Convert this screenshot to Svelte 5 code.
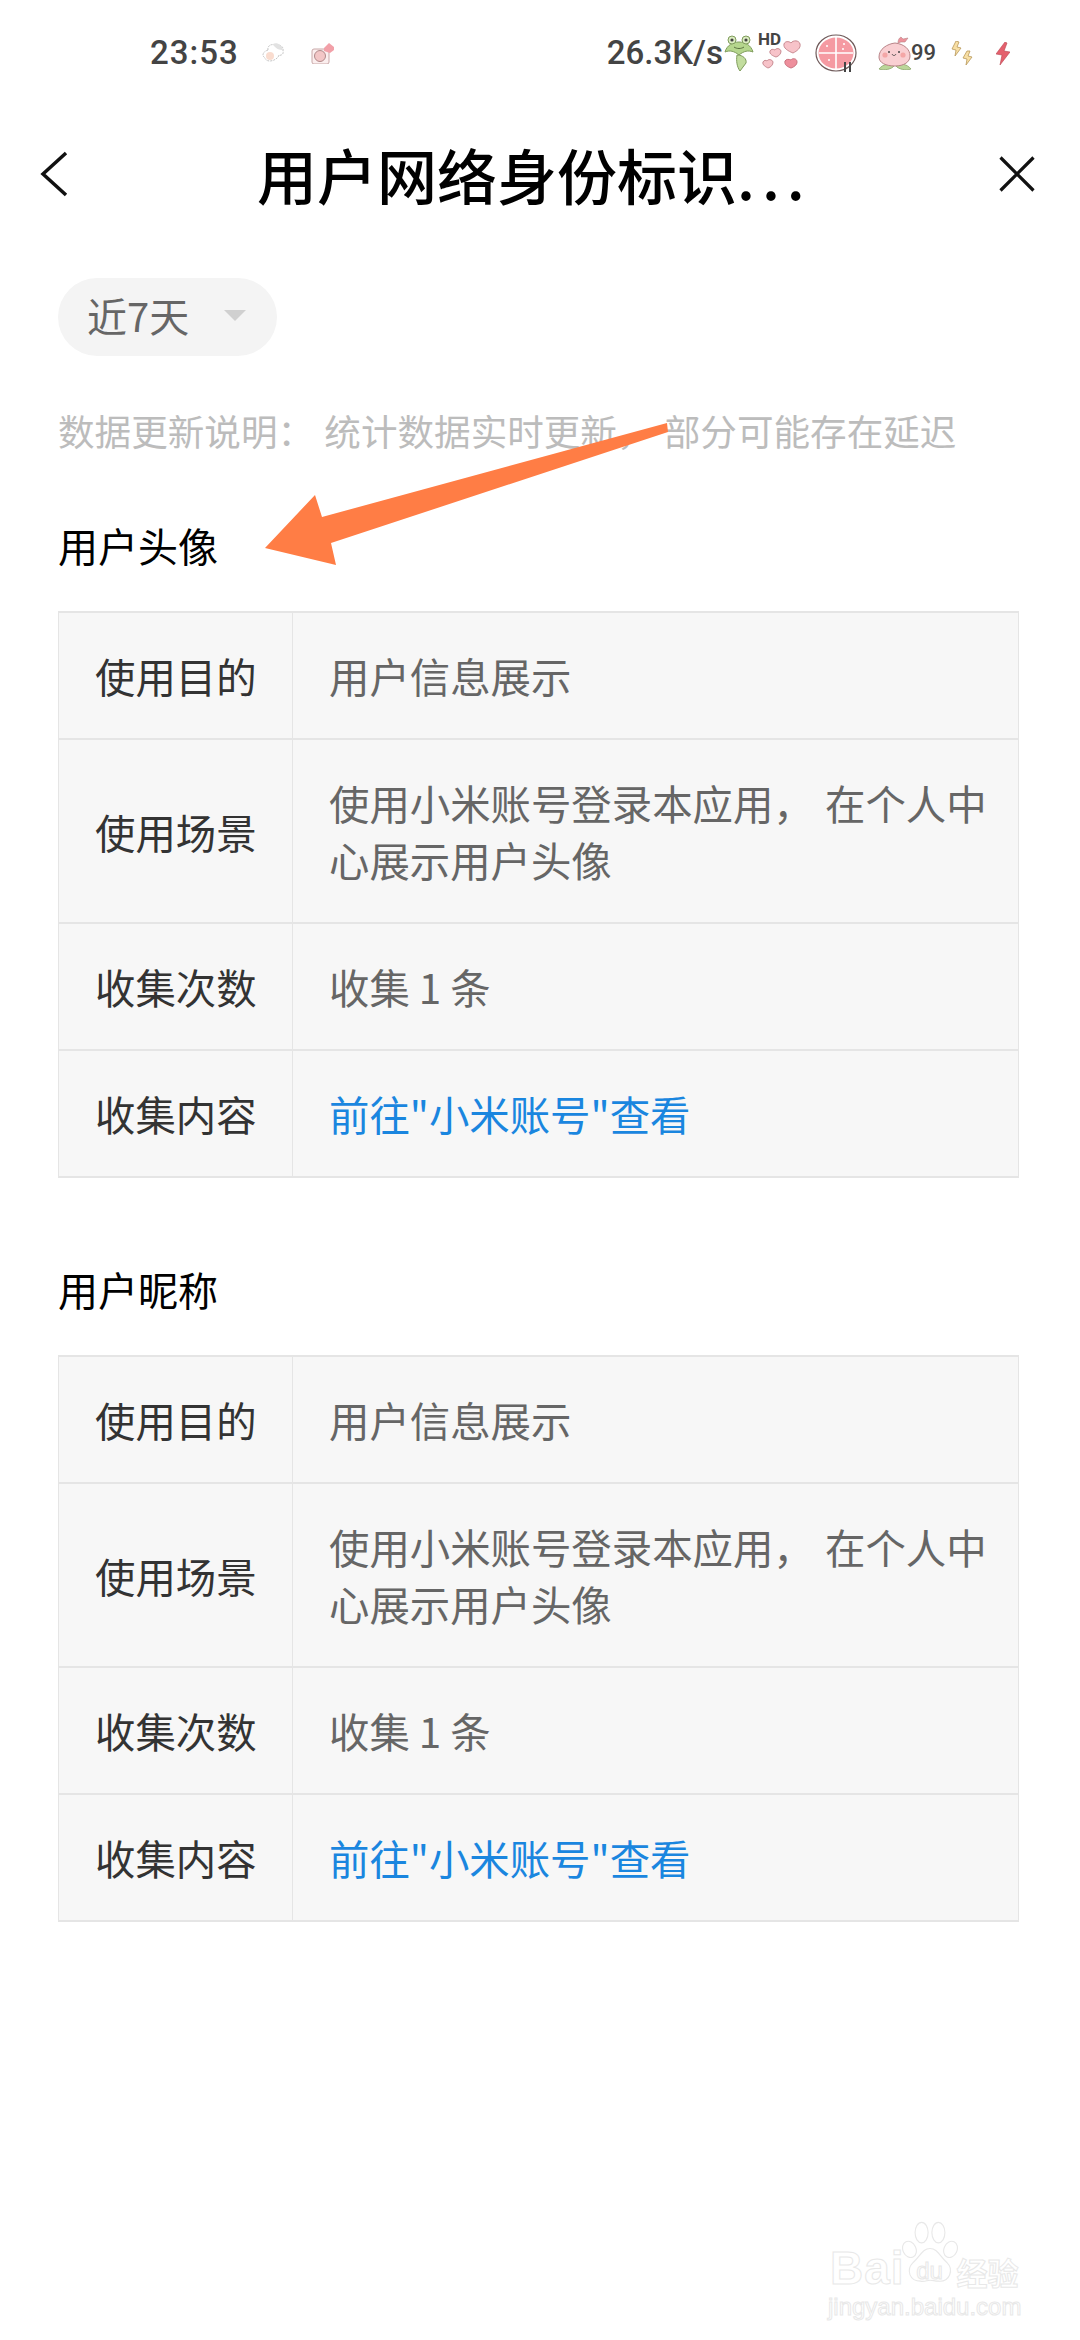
<script lang="ts">
	const sections = ['用户头像', '用户昵称'];
</script>

<div class="page">
	<div class="statusbar">
		<div class="status-left">
			<span class="time">23:53</span>
			<svg class="ic-sheep" viewBox="0 0 24 22" aria-hidden="true">
				<path d="M7 8c-1-5 5-7 8-4 3-2 8 0 7 5 1 3-2 5-4 4-1 5-12 9-14 3-3-2-3-6 3-8z" fill="#fff" stroke="#c4c4c4" stroke-width="1" stroke-dasharray="2 1" />
				<path d="M12 2c3-2 9 0 10 6-3 0-8-1-10-6z" fill="#e2e2e2" />
				<circle cx="9" cy="14" r="4" fill="#f9dccf" />
			</svg>
			<svg class="ic-pig" viewBox="0 0 24 22" aria-hidden="true">
				<rect x="1" y="7" width="17" height="15" rx="2" fill="#fbeeee" stroke="#c9a8a8" stroke-width="1" />
				<circle cx="9" cy="14" r="5.5" fill="#f3c6c6" stroke="#b08a8a" stroke-width="1" />
				<path d="M13 6l5-5 5 4v3l-4 3-6-2z" fill="#f2a0a8" />
			</svg>
		</div>
		<div class="status-right">
			<span class="speed">26.3K/s</span>
			<svg class="ic-frog" viewBox="0 0 30 38" aria-hidden="true">
				<path d="M1 18C3 11 9 8 15 8s12 3 14 10c-5-2-9-1-14 3-5-4-9-5-14-3z" fill="#b5d68d" stroke="#7f9c5c" stroke-width="1" />
				<circle cx="8" cy="6" r="4" fill="#dcecc2" stroke="#7f9c5c" stroke-width="1" />
				<circle cx="22" cy="6" r="4" fill="#dcecc2" stroke="#7f9c5c" stroke-width="1" />
				<circle cx="8" cy="6" r="1.6" fill="#444" />
				<circle cx="22" cy="6" r="1.6" fill="#444" />
				<path d="M10 13c3 2 7 2 10 0" fill="none" stroke="#5a7040" stroke-width="1" />
				<path d="M13 21c6 0 10 4 9 8l-6 8c-3-4-4-10-3-16z" fill="#c2dd9e" stroke="#7f9c5c" stroke-width="1" />
			</svg>
			<div class="hd-hearts">
				<span class="hd">HD</span>
				<svg class="ic-hearts" viewBox="0 0 40 32" aria-hidden="true">
					<path d="M31 16c-5-2-10-5-9-9 1-3 5-3 7-1 2-3 8-3 9 1 1 4-3 7-7 9z" fill="#f7c3c9" stroke="#c98b92" stroke-width="1" />
					<path d="M14 20c-3-1-7-3-6-6 1-2 3-2 5-1 1-2 5-2 6 1 0 3-2 5-5 6z" fill="#f7c3c9" stroke="#c98b92" stroke-width="1" />
					<path d="M6 31c-2-1-6-3-5-6 1-2 3-2 4-1 1-2 5-2 6 1 0 3-2 5-5 6z" fill="#f7c3c9" stroke="#c98b92" stroke-width="1" />
					<path d="M29 31c-3-1-7-3-6-7 1-2 4-2 6-1 1-2 6-2 6 2 0 3-3 5-6 6z" fill="#ee8f9c" stroke="#c9727e" stroke-width="1" />
				</svg>
			</div>
			<div class="ic-fruit-wrap">
				<svg class="ic-fruit" viewBox="0 0 42 38" aria-hidden="true">
					<ellipse cx="21" cy="19" rx="20" ry="18" fill="#fff" stroke="#6f5a5a" stroke-width="1.2" />
					<ellipse cx="21" cy="19" rx="17.5" ry="15.5" fill="#f59aa2" />
					<path d="M21 3v32M4 19h34" stroke="#fff" stroke-width="1.6" />
					<g fill="#fff">
						<circle cx="12" cy="12" r="1" />
						<circle cx="29" cy="10" r="1" />
						<circle cx="14" cy="26" r="1" />
						<circle cx="28" cy="15" r="1" />
					</g>
				</svg>
				<span class="bars"></span>
			</div>
			<svg class="ic-peach" viewBox="0 0 36 34" aria-hidden="true">
				<path d="M2 33c4-5 10-6 15-3-2 3-10 5-15 3zM34 33c-4-5-10-6-15-3 2 3 10 5 15 3z" fill="#bcd69a" stroke="#8aa56a" stroke-width="0.8" />
				<path d="M18 7C10 8 2 13 2 21c0 6 7 9 16 9s15-4 15-10c0-7-6-12-15-13z" fill="#f9cfd2" stroke="#b98488" stroke-width="1" />
				<path d="M21 7c0-3 1-5 3-6l2 2 5-1-3 4h-4z" fill="#ee929b" stroke="#b98488" stroke-width="0.6" />
				<circle cx="12" cy="16" r="1" fill="#444" />
				<circle cx="22" cy="16" r="1" fill="#444" />
				<path d="M15 18c1 2 3 2 4 0" fill="none" stroke="#444" stroke-width="0.9" />
				<circle cx="8" cy="19" r="2.6" fill="#f4a6a6" />
				<circle cx="26" cy="19" r="2.6" fill="#f4a6a6" />
			</svg>
			<span class="signal">99</span>
			<svg class="ic-bolts" viewBox="0 0 22 25" aria-hidden="true">
				<path d="M5 0L1 8l4 1-1 6 6-8-4-1 2-5z" fill="#f8dfa4" stroke="#b7985a" stroke-width="0.8" />
				<path d="M16 10l-4 7 4 1-1 6 6-8-4-1 2-5z" fill="#f8dfa4" stroke="#b7985a" stroke-width="0.8" />
			</svg>
			<svg class="ic-bolt" viewBox="0 0 14 23" aria-hidden="true">
				<path d="M9 0L0 12l6 1-2 10 10-13-6-1 3-8z" fill="#e4606d" stroke="#b9434f" stroke-width="0.6" />
			</svg>
		</div>
	</div>

	<header class="header">
		<svg class="back" viewBox="0 0 28 46" aria-hidden="true">
			<path d="M26 2L3 23l23 21" />
		</svg>
		<h1 class="title">用户网络身份标识<span class="dots">...</span></h1>
		<svg class="close" viewBox="0 0 36 36" aria-hidden="true">
			<path d="M1.5 1.5l33 33M34.5 1.5l-33 33" />
		</svg>
	</header>

	<main class="content">
		<div class="range">
			<span>近7天</span>
			<i class="caret"></i>
		</div>
		<p class="note">数据更新说明<span class="punct">&#xFF1A;</span>统计数据实时更新<span class="punct">&#xFF0C;</span>部分可能存在延迟</p>

		{#each sections as name}
			<section class="block">
				<h2 class="block-title">{name}</h2>
				<table class="info">
					<tbody>
						<tr>
							<th>使用目的</th>
							<td>用户信息展示</td>
						</tr>
						<tr>
							<th>使用场景</th>
							<td>使用小米账号登录本应用<span class="punct">&#xFF0C;</span>在个人中心展示用户头像</td>
						</tr>
						<tr>
							<th>收集次数</th>
							<td>收集 1 条</td>
						</tr>
						<tr>
							<th>收集内容</th>
							<td class="link">前往"小米账号"查看</td>
						</tr>
					</tbody>
				</table>
			</section>
		{/each}
	</main>

	<!-- annotation arrow pasted over the screenshot -->
	<svg class="arrow" viewBox="0 0 1080 700" aria-hidden="true">
		<polygon points="667,423 322,517 315,495 265,548 336,565 331,543 668,432" fill="#ff7d45" />
	</svg>

	<div class="watermark">
		<div class="wm-top">
			<span class="wm-bai">Bai</span>
			<div class="wm-paw">
				<svg viewBox="0 0 60 72" aria-hidden="true">
					<ellipse cx="8" cy="30" rx="7" ry="9" transform="rotate(-25 8 30)" />
					<ellipse cx="21" cy="12" rx="7" ry="11" />
					<ellipse cx="39" cy="12" rx="7" ry="11" />
					<ellipse cx="52" cy="30" rx="7" ry="9" transform="rotate(25 52 30)" />
					<path d="M30 29c8 0 11 9 18 15 8 8 3 21-9 20-4 0-6-1-9-1s-6 2-10 1C8 64 4 52 12 44c7-6 10-15 18-15z" />
				</svg>
				<span class="wm-du">du</span>
			</div>
			<span class="wm-cn">经验</span>
		</div>
		<span class="wm-url">jingyan.baidu.com</span>
	</div>
</div>

<style>
	:global(body) {
		margin: 0;
		background: #fff;
	}

	.page {
		position: relative;
		width: 1080px;
		height: 2340px;
		overflow: hidden;
		background: #fff;
		font-family: 'Noto Sans CJK SC', 'Noto Sans', sans-serif;
	}

	.statusbar {
		display: flex;
		align-items: center;
		justify-content: space-between;
		height: 106px;
		padding: 0 70px 0 150px;
		box-sizing: border-box;
		color: #444;
		font-family: Roboto, 'Noto Sans', sans-serif;
	}

	.status-left,
	.status-right {
		display: flex;
		align-items: center;
	}

	.time {
		font-size: 33px;
		font-weight: 500;
		letter-spacing: 1px;
		line-height: 40px;
	}

	.ic-sheep {
		width: 24px;
		height: 22px;
		margin-left: 22px;
	}

	.ic-pig {
		width: 24px;
		height: 22px;
		margin-left: 26px;
	}

	.speed {
		font-size: 33px;
		font-weight: 500;
		line-height: 40px;
	}

	.ic-frog {
		width: 30px;
		height: 38px;
		margin-left: 1px;
	}

	.hd-hearts {
		position: relative;
		width: 46px;
		height: 38px;
		margin-left: 3px;
	}

	.hd {
		position: absolute;
		left: 1px;
		top: -4px;
		font-size: 17px;
		font-weight: 700;
		line-height: 18px;
	}

	.ic-hearts {
		position: absolute;
		left: 4px;
		top: 3px;
		width: 42px;
		height: 32px;
	}

	.ic-fruit-wrap {
		position: relative;
		width: 42px;
		height: 38px;
		margin-left: 12px;
	}

	.ic-fruit {
		display: block;
		width: 42px;
		height: 38px;
	}

	.bars {
		position: absolute;
		right: 6px;
		bottom: 0;
		width: 3px;
		height: 10px;
		border-left: 2px solid #444;
		border-right: 2px solid #444;
	}

	.ic-peach {
		width: 36px;
		height: 34px;
		margin-left: 20px;
	}

	.signal {
		font-size: 22px;
		font-weight: 500;
		margin-left: -2px;
		line-height: 30px;
	}

	.ic-bolts {
		width: 22px;
		height: 25px;
		margin-left: 15px;
	}

	.ic-bolt {
		width: 14px;
		height: 23px;
		margin-left: 23px;
	}

	.header {
		display: flex;
		align-items: center;
		height: 136px;
		padding: 0 45px 0 40px;
		box-sizing: border-box;
	}

	.back {
		width: 28px;
		height: 46px;
		fill: none;
		stroke: #111;
		stroke-width: 3.5;
		flex: none;
	}

	.title {
		flex: 1;
		margin: 0 0 0 189px;
		font-size: 60px;
		font-weight: 500;
		line-height: 80px;
		color: #000;
		white-space: nowrap;
	}

	.dots {
		letter-spacing: 7px;
	}

	.close {
		width: 36px;
		height: 36px;
		fill: none;
		stroke: #111;
		stroke-width: 3.2;
		flex: none;
	}

	.content {
		padding: 36px 61px 0 58px;
	}

	.range {
		display: inline-flex;
		align-items: center;
		box-sizing: border-box;
		width: 219px;
		height: 78px;
		padding: 0 0 4px 29px;
		border-radius: 39px;
		background: #f4f4f4;
		color: #666;
		font-size: 40px;
		line-height: 56px;
		vertical-align: top;
	}

	.caret {
		width: 0;
		height: 0;
		margin-left: 35px;
		border-left: 11.5px solid transparent;
		border-right: 11.5px solid transparent;
		border-top: 11px solid #d0d0d0;
	}

	.note {
		margin: 50px 0 0;
		font-size: 36.6px;
		line-height: 50px;
		color: #bcbcbc;
		white-space: nowrap;
	}

	/* full-width marks sit wider in the original font */
	.punct {
		letter-spacing: 0.28em;
	}

	.block {
		margin-top: 66px;
	}

	.block + .block {
		margin-top: 88px;
	}

	.block-title {
		margin: -2px 0 41px;
		font-size: 40px;
		font-weight: 400;
		line-height: 50px;
		color: #000;
	}

	.info {
		width: 961px;
		border-collapse: collapse;
		table-layout: fixed;
		background: #f7f7f7;
	}

	.info th,
	.info td {
		padding: 34px 28px 34px 36px;
		border: 1px solid #e5e5e5;
		border-width: 2px 1px;
		font-size: 40.4px;
		font-weight: 400;
		line-height: 57px;
		text-align: left;
	}

	.info th {
		width: 197px;
		padding-left: 36px;
		padding-right: 0;
		color: #333;
		white-space: nowrap;
	}

	.info td {
		color: #666;
	}

	.info td.link {
		color: #1a86df;
	}

	.arrow {
		position: absolute;
		left: 0;
		top: 0;
		width: 1080px;
		height: 700px;
		pointer-events: none;
	}

	.watermark {
		position: absolute;
		left: 830px;
		top: 2220px;
		width: 200px;
		display: flex;
		flex-direction: column;
		color: #fff;
		-webkit-text-stroke: 1px #e8e8e8;
		font-family: 'Liberation Sans', sans-serif;
	}

	.wm-top {
		display: flex;
		align-items: flex-end;
		height: 70px;
	}

	.wm-bai {
		font-size: 46px;
		font-weight: 700;
		line-height: 46px;
		letter-spacing: 1px;
		margin-bottom: -1px;
	}

	.wm-paw {
		position: relative;
		width: 56px;
		height: 70px;
		margin-left: -3px;
		flex: none;
	}

	.wm-paw svg {
		display: block;
		width: 56px;
		height: 70px;
		fill: #fff;
		stroke: #e8e8e8;
		stroke-width: 1.2;
	}

	.wm-du {
		position: absolute;
		left: 0;
		right: 0;
		bottom: 6px;
		text-align: center;
		font-size: 24px;
		line-height: 26px;
	}

	.wm-cn {
		font-family: 'Noto Sans CJK SC', sans-serif;
		font-size: 31px;
		font-weight: 700;
		line-height: 36px;
		margin-left: -1px;
		white-space: nowrap;
	}

	.wm-url {
		margin: 3px 0 0 -2px;
		font-size: 24px;
		line-height: 28px;
		white-space: nowrap;
	}
</style>
